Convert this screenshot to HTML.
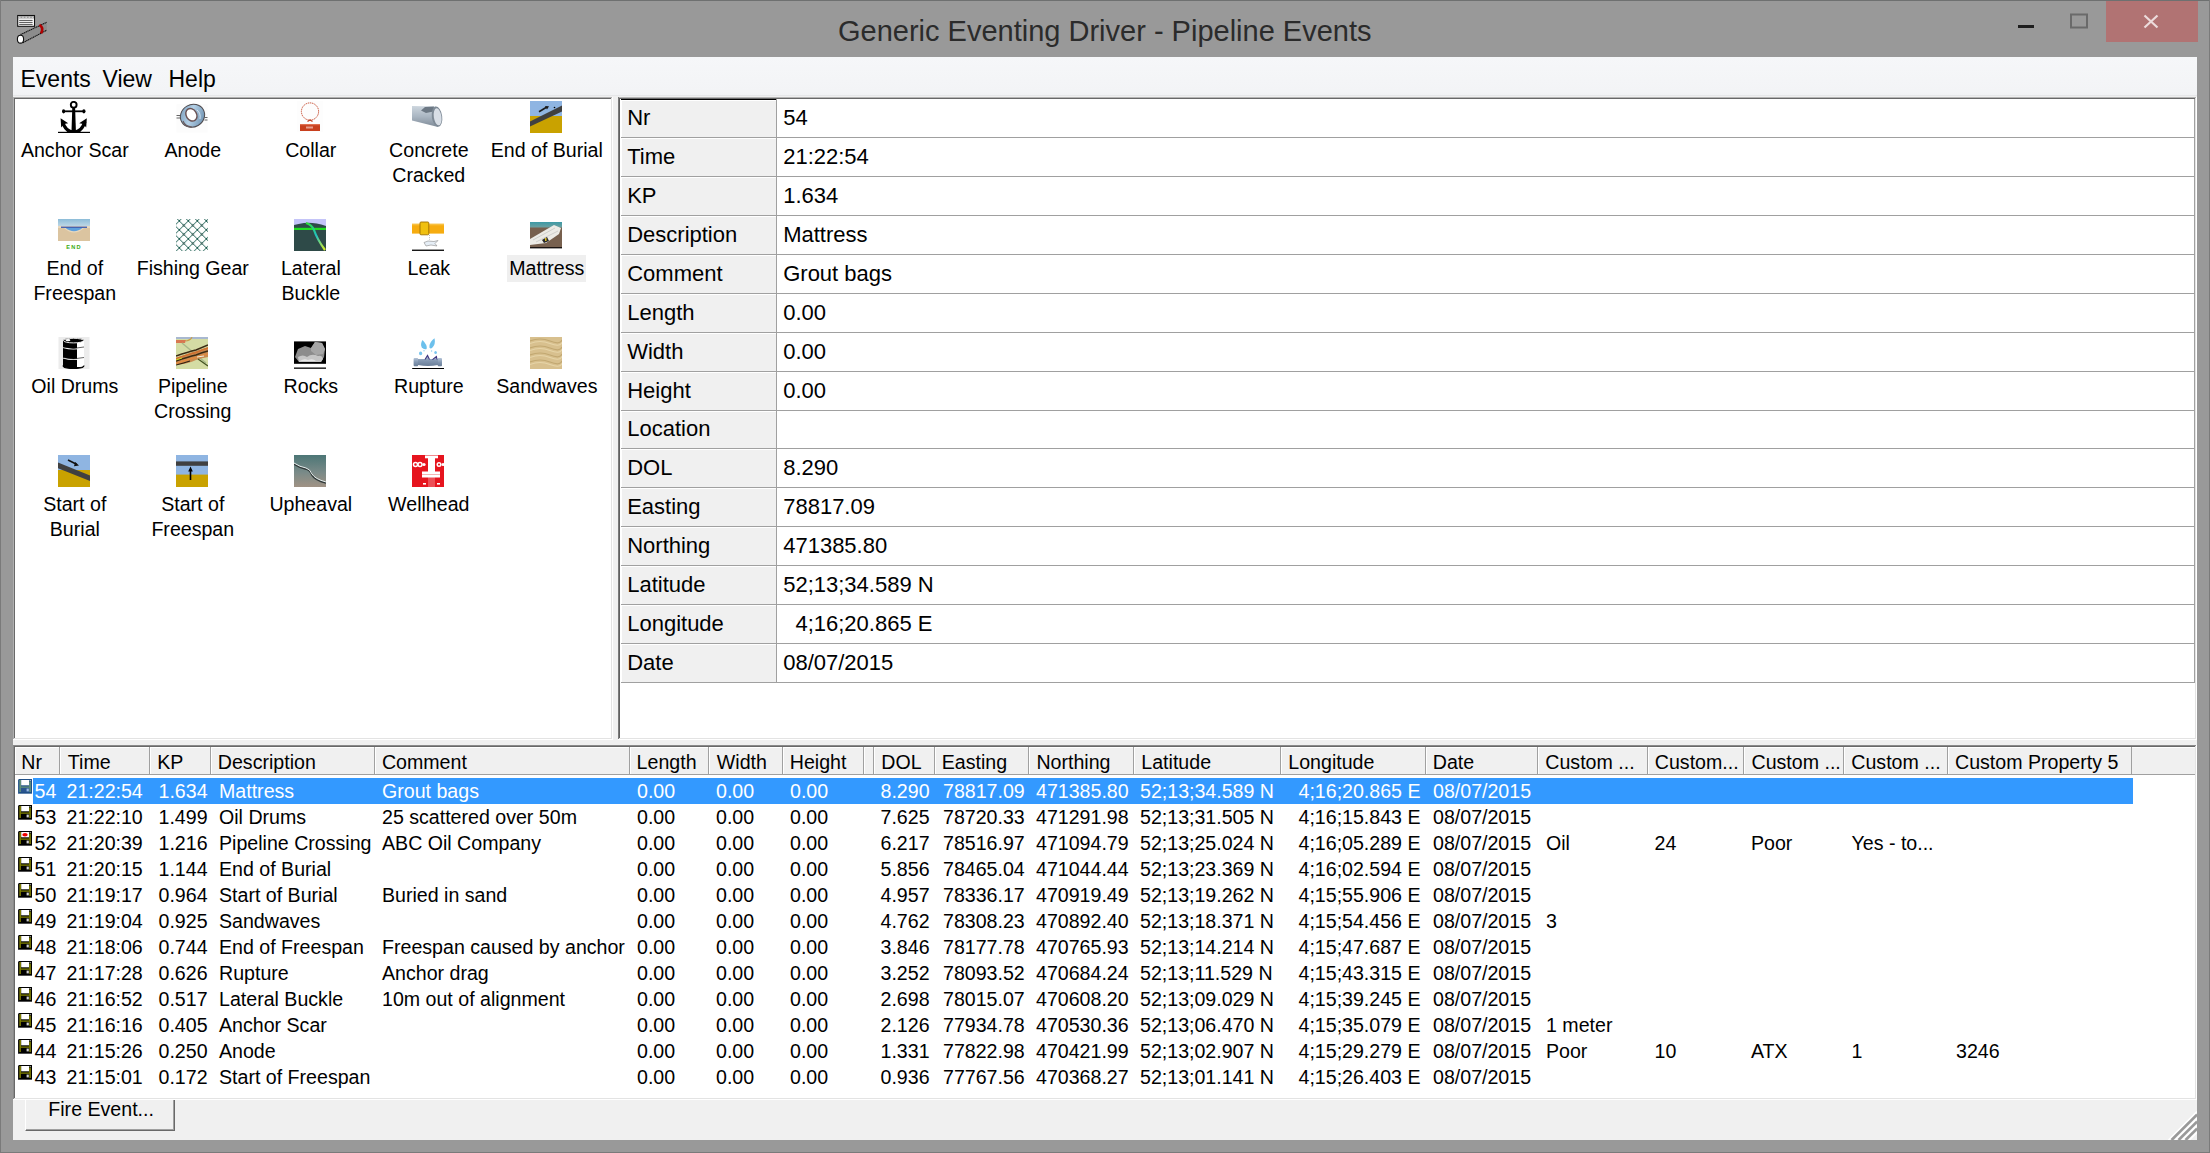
<!DOCTYPE html>
<html><head><meta charset="utf-8"><title>Generic Eventing Driver - Pipeline Events</title>
<style>
html,body{margin:0;padding:0;width:2210px;height:1153px;overflow:hidden;background:#999;}
body{position:relative;font-family:"Liberation Sans",sans-serif;}
.r{position:absolute;}
.t{position:absolute;line-height:30px;white-space:pre;}
</style></head><body>
<div class="r" style="left:0px;top:0px;width:2210px;height:1153px;background:#999999;"></div>
<div class="r" style="left:0px;top:0px;width:2210px;height:1px;background:#6e7070;"></div>
<div class="r" style="left:0px;top:0px;width:1px;height:1153px;background:#7a7a7a;"></div>
<div class="r" style="left:2209px;top:0px;width:1px;height:1153px;background:#7a7a7a;"></div>
<div class="r" style="left:0px;top:1152px;width:2210px;height:1px;background:#7a7a7a;"></div>
<div class="r" style="left:2106px;top:1px;width:92px;height:41px;background:#b17373;"></div>
<svg class="r" style="left:2106px;top:1px" width="92" height="41"><path d="M38.5 14.5 L51.5 26.5 M51.5 14.5 L38.5 26.5" stroke="#ecdcdc" stroke-width="2.2"/></svg>
<svg class="r" style="left:2060px;top:8px" width="40" height="30"><rect x="11" y="6.5" width="16" height="13" fill="none" stroke="#6a6a6a" stroke-width="2"/></svg>
<div class="r" style="left:2018px;top:25px;width:16px;height:3px;background:#1e1e1e;"></div>
<div class="t" style="left:838.0px;top:16.15px;font-size:29px;color:#2b2b2b;">Generic Eventing Driver - Pipeline Events</div>
<svg class="r" style="left:0px;top:0px" width="60" height="50" viewBox="0 0 60 50">
<rect x="17.7" y="15.5" width="16.8" height="10.8" fill="#fff" stroke="#111" stroke-width="1.1"/>
<rect x="18.3" y="16.1" width="15.6" height="2.4" fill="#9a9a9a"/>
<path d="M19 17.3h14" stroke="#e0e0e0" stroke-width="1.1" stroke-dasharray="1.6 1.6"/>
<path d="M19.2 20.4h13.4M19.2 22.4h13.4M19.2 24.4h13.4" stroke="#222" stroke-width="0.8"/>
<path d="M20.5 34.6 L46.8 22.2 L46.8 30.2 L22.9 42.7 Z" fill="#8c8c8c"/>
<path d="M20.5 34.6 L46.8 22.2 M22.9 42.7 L46.8 30.2" stroke="#111" stroke-width="1.1" stroke-dasharray="1.4 0.5"/>
<path d="M39.4 24.8 Q44.2 27.6 41 33.4" stroke="#b00000" stroke-width="2.6" fill="none"/>
<ellipse cx="20.5" cy="39.2" rx="3.1" ry="3.9" fill="#fff" stroke="#111" stroke-width="1.1"/>
</svg>
<div class="r" style="left:13px;top:57px;width:2184px;height:1083px;background:#f0f0f0;"></div>
<div class="r" style="left:13px;top:57px;width:2184px;height:40px;background:linear-gradient(#f6f7f9 0%,#f3f4f6 85%,#f0f1f3 100%);"></div>
<div class="r" style="left:13px;top:95px;width:2184px;height:1px;background:#e6e7e9;"></div>
<div class="r" style="left:13px;top:96px;width:2184px;height:1px;background:#f0f0f0;"></div>
<div class="t" style="left:20.5px;top:63.83px;font-size:23px;color:#000;">Events</div>
<div class="t" style="left:102.5px;top:63.83px;font-size:23px;color:#000;">View</div>
<div class="t" style="left:168.5px;top:63.83px;font-size:23px;color:#000;">Help</div>
<div class="r" style="left:13px;top:97px;width:600px;height:643px;background:#fff;"></div>
<div class="r" style="left:13px;top:97px;width:599px;height:1px;background:#b0b0b0;"></div>
<div class="r" style="left:13px;top:97px;width:1px;height:642px;background:#b0b0b0;"></div>
<div class="r" style="left:14px;top:98px;width:597px;height:1px;background:#696969;"></div>
<div class="r" style="left:14px;top:98px;width:1px;height:640px;background:#696969;"></div>
<div class="r" style="left:13px;top:739px;width:600px;height:1px;background:#fff;"></div>
<div class="r" style="left:612px;top:97px;width:1px;height:643px;background:#fff;"></div>
<div class="r" style="left:14px;top:738px;width:598px;height:1px;background:#e3e3e3;"></div>
<div class="r" style="left:611px;top:98px;width:1px;height:641px;background:#e3e3e3;"></div>
<div class="r" style="left:618px;top:97px;width:1579px;height:643px;background:#fff;"></div>
<div class="r" style="left:618px;top:97px;width:1578px;height:1px;background:#b4b4b4;"></div>
<div class="r" style="left:618px;top:97px;width:1px;height:642px;background:#b4b4b4;"></div>
<div class="r" style="left:619px;top:98px;width:1576px;height:1px;background:#686868;"></div>
<div class="r" style="left:619px;top:98px;width:1px;height:640px;background:#686868;"></div>
<div class="r" style="left:618px;top:739px;width:1579px;height:1px;background:#fff;"></div>
<div class="r" style="left:2196px;top:97px;width:1px;height:643px;background:#fff;"></div>
<div class="r" style="left:619px;top:738px;width:1577px;height:1px;background:#e3e3e3;"></div>
<div class="r" style="left:2195px;top:98px;width:1px;height:641px;background:#e3e3e3;"></div>
<div class="r" style="left:618px;top:97px;width:1px;height:642px;background:#7a7a7a;"></div>
<div class="r" style="left:619px;top:98px;width:1px;height:640px;background:#606060;"></div>
<div class="r" style="left:621px;top:99px;width:155px;height:1px;background:#000;"></div>
<div class="r" style="left:621px;top:100px;width:155px;height:37px;background:#f0f0f0;"></div>
<div class="r" style="left:621px;top:100px;width:155px;height:1px;background:#fff;"></div>
<div class="r" style="left:621px;top:100px;width:1px;height:37px;background:#fff;"></div>
<div class="r" style="left:621px;top:137px;width:1573px;height:1px;background:#a0a0a0;"></div>
<div class="t" style="left:627.2px;top:102.77px;font-size:22px;color:#000;">Nr</div>
<div class="t" style="left:783.2px;top:102.77px;font-size:22px;color:#000;">54</div>
<div class="r" style="left:621px;top:138px;width:155px;height:38px;background:#f0f0f0;"></div>
<div class="r" style="left:621px;top:138px;width:155px;height:1px;background:#fff;"></div>
<div class="r" style="left:621px;top:138px;width:1px;height:38px;background:#fff;"></div>
<div class="r" style="left:621px;top:176px;width:1573px;height:1px;background:#a0a0a0;"></div>
<div class="t" style="left:627.2px;top:141.77px;font-size:22px;color:#000;">Time</div>
<div class="t" style="left:783.2px;top:141.77px;font-size:22px;color:#000;">21:22:54</div>
<div class="r" style="left:621px;top:177px;width:155px;height:38px;background:#f0f0f0;"></div>
<div class="r" style="left:621px;top:177px;width:155px;height:1px;background:#fff;"></div>
<div class="r" style="left:621px;top:177px;width:1px;height:38px;background:#fff;"></div>
<div class="r" style="left:621px;top:215px;width:1573px;height:1px;background:#a0a0a0;"></div>
<div class="t" style="left:627.2px;top:180.77px;font-size:22px;color:#000;">KP</div>
<div class="t" style="left:783.2px;top:180.77px;font-size:22px;color:#000;">1.634</div>
<div class="r" style="left:621px;top:216px;width:155px;height:38px;background:#f0f0f0;"></div>
<div class="r" style="left:621px;top:216px;width:155px;height:1px;background:#fff;"></div>
<div class="r" style="left:621px;top:216px;width:1px;height:38px;background:#fff;"></div>
<div class="r" style="left:621px;top:254px;width:1573px;height:1px;background:#a0a0a0;"></div>
<div class="t" style="left:627.2px;top:219.77px;font-size:22px;color:#000;">Description</div>
<div class="t" style="left:783.2px;top:219.77px;font-size:22px;color:#000;">Mattress</div>
<div class="r" style="left:621px;top:255px;width:155px;height:38px;background:#f0f0f0;"></div>
<div class="r" style="left:621px;top:255px;width:155px;height:1px;background:#fff;"></div>
<div class="r" style="left:621px;top:255px;width:1px;height:38px;background:#fff;"></div>
<div class="r" style="left:621px;top:293px;width:1573px;height:1px;background:#a0a0a0;"></div>
<div class="t" style="left:627.2px;top:258.77px;font-size:22px;color:#000;">Comment</div>
<div class="t" style="left:783.2px;top:258.77px;font-size:22px;color:#000;">Grout&nbsp;bags</div>
<div class="r" style="left:621px;top:294px;width:155px;height:38px;background:#f0f0f0;"></div>
<div class="r" style="left:621px;top:294px;width:155px;height:1px;background:#fff;"></div>
<div class="r" style="left:621px;top:294px;width:1px;height:38px;background:#fff;"></div>
<div class="r" style="left:621px;top:332px;width:1573px;height:1px;background:#a0a0a0;"></div>
<div class="t" style="left:627.2px;top:297.77px;font-size:22px;color:#000;">Length</div>
<div class="t" style="left:783.2px;top:297.77px;font-size:22px;color:#000;">0.00</div>
<div class="r" style="left:621px;top:333px;width:155px;height:38px;background:#f0f0f0;"></div>
<div class="r" style="left:621px;top:333px;width:155px;height:1px;background:#fff;"></div>
<div class="r" style="left:621px;top:333px;width:1px;height:38px;background:#fff;"></div>
<div class="r" style="left:621px;top:371px;width:1573px;height:1px;background:#a0a0a0;"></div>
<div class="t" style="left:627.2px;top:336.77px;font-size:22px;color:#000;">Width</div>
<div class="t" style="left:783.2px;top:336.77px;font-size:22px;color:#000;">0.00</div>
<div class="r" style="left:621px;top:372px;width:155px;height:38px;background:#f0f0f0;"></div>
<div class="r" style="left:621px;top:372px;width:155px;height:1px;background:#fff;"></div>
<div class="r" style="left:621px;top:372px;width:1px;height:38px;background:#fff;"></div>
<div class="r" style="left:621px;top:410px;width:1573px;height:1px;background:#a0a0a0;"></div>
<div class="t" style="left:627.2px;top:375.77px;font-size:22px;color:#000;">Height</div>
<div class="t" style="left:783.2px;top:375.77px;font-size:22px;color:#000;">0.00</div>
<div class="r" style="left:621px;top:411px;width:155px;height:37px;background:#f0f0f0;"></div>
<div class="r" style="left:621px;top:411px;width:155px;height:1px;background:#fff;"></div>
<div class="r" style="left:621px;top:411px;width:1px;height:37px;background:#fff;"></div>
<div class="r" style="left:621px;top:448px;width:1573px;height:1px;background:#a0a0a0;"></div>
<div class="t" style="left:627.2px;top:413.77px;font-size:22px;color:#000;">Location</div>
<div class="r" style="left:621px;top:449px;width:155px;height:38px;background:#f0f0f0;"></div>
<div class="r" style="left:621px;top:449px;width:155px;height:1px;background:#fff;"></div>
<div class="r" style="left:621px;top:449px;width:1px;height:38px;background:#fff;"></div>
<div class="r" style="left:621px;top:487px;width:1573px;height:1px;background:#a0a0a0;"></div>
<div class="t" style="left:627.2px;top:452.77px;font-size:22px;color:#000;">DOL</div>
<div class="t" style="left:783.2px;top:452.77px;font-size:22px;color:#000;">8.290</div>
<div class="r" style="left:621px;top:488px;width:155px;height:38px;background:#f0f0f0;"></div>
<div class="r" style="left:621px;top:488px;width:155px;height:1px;background:#fff;"></div>
<div class="r" style="left:621px;top:488px;width:1px;height:38px;background:#fff;"></div>
<div class="r" style="left:621px;top:526px;width:1573px;height:1px;background:#a0a0a0;"></div>
<div class="t" style="left:627.2px;top:491.77px;font-size:22px;color:#000;">Easting</div>
<div class="t" style="left:783.2px;top:491.77px;font-size:22px;color:#000;">78817.09</div>
<div class="r" style="left:621px;top:527px;width:155px;height:38px;background:#f0f0f0;"></div>
<div class="r" style="left:621px;top:527px;width:155px;height:1px;background:#fff;"></div>
<div class="r" style="left:621px;top:527px;width:1px;height:38px;background:#fff;"></div>
<div class="r" style="left:621px;top:565px;width:1573px;height:1px;background:#a0a0a0;"></div>
<div class="t" style="left:627.2px;top:530.77px;font-size:22px;color:#000;">Northing</div>
<div class="t" style="left:783.2px;top:530.77px;font-size:22px;color:#000;">471385.80</div>
<div class="r" style="left:621px;top:566px;width:155px;height:38px;background:#f0f0f0;"></div>
<div class="r" style="left:621px;top:566px;width:155px;height:1px;background:#fff;"></div>
<div class="r" style="left:621px;top:566px;width:1px;height:38px;background:#fff;"></div>
<div class="r" style="left:621px;top:604px;width:1573px;height:1px;background:#a0a0a0;"></div>
<div class="t" style="left:627.2px;top:569.77px;font-size:22px;color:#000;">Latitude</div>
<div class="t" style="left:783.2px;top:569.77px;font-size:22px;color:#000;">52;13;34.589&nbsp;N</div>
<div class="r" style="left:621px;top:605px;width:155px;height:38px;background:#f0f0f0;"></div>
<div class="r" style="left:621px;top:605px;width:155px;height:1px;background:#fff;"></div>
<div class="r" style="left:621px;top:605px;width:1px;height:38px;background:#fff;"></div>
<div class="r" style="left:621px;top:643px;width:1573px;height:1px;background:#a0a0a0;"></div>
<div class="t" style="left:627.2px;top:608.77px;font-size:22px;color:#000;">Longitude</div>
<div class="t" style="left:783.2px;top:608.77px;font-size:22px;color:#000;">&nbsp;&nbsp;4;16;20.865&nbsp;E</div>
<div class="r" style="left:621px;top:644px;width:155px;height:38px;background:#f0f0f0;"></div>
<div class="r" style="left:621px;top:644px;width:155px;height:1px;background:#fff;"></div>
<div class="r" style="left:621px;top:644px;width:1px;height:38px;background:#fff;"></div>
<div class="r" style="left:621px;top:682px;width:1573px;height:1px;background:#a0a0a0;"></div>
<div class="t" style="left:627.2px;top:647.77px;font-size:22px;color:#000;">Date</div>
<div class="t" style="left:783.2px;top:647.77px;font-size:22px;color:#000;">08/07/2015</div>
<div class="r" style="left:776px;top:99px;width:1px;height:584px;background:#a0a0a0;"></div>
<div class="r" style="left:2194px;top:99px;width:1px;height:584px;background:#a0a0a0;"></div>
<div class="r" style="left:13px;top:745px;width:2184px;height:355px;background:#fff;"></div>
<div class="r" style="left:13px;top:745px;width:2183px;height:1px;background:#8a8a8a;"></div>
<div class="r" style="left:13px;top:745px;width:1px;height:354px;background:#8a8a8a;"></div>
<div class="r" style="left:14px;top:746px;width:2181px;height:1px;background:#696969;"></div>
<div class="r" style="left:14px;top:746px;width:1px;height:352px;background:#696969;"></div>
<div class="r" style="left:13px;top:1099px;width:2184px;height:1px;background:#fff;"></div>
<div class="r" style="left:2196px;top:745px;width:1px;height:355px;background:#fff;"></div>
<div class="r" style="left:14px;top:1098px;width:2182px;height:1px;background:#e3e3e3;"></div>
<div class="r" style="left:2195px;top:746px;width:1px;height:353px;background:#e3e3e3;"></div>
<div class="r" style="left:15px;top:747px;width:2180px;height:28px;background:#f0f0f0;"></div>
<div class="r" style="left:15px;top:747px;width:2180px;height:1px;background:#fff;"></div>
<div class="r" style="left:15px;top:774px;width:2180px;height:1px;background:#a0a0a0;"></div>
<div class="r" style="left:15px;top:747px;width:1px;height:27px;background:#fff;"></div>
<div class="r" style="left:59px;top:747px;width:1px;height:28px;background:#a0a0a0;"></div>
<div class="t" style="left:21.3px;top:747.10px;font-size:19.6px;color:#000;">Nr</div>
<div class="r" style="left:60px;top:747px;width:1px;height:27px;background:#fff;"></div>
<div class="r" style="left:149px;top:747px;width:1px;height:28px;background:#a0a0a0;"></div>
<div class="t" style="left:67.8px;top:747.10px;font-size:19.6px;color:#000;">Time</div>
<div class="r" style="left:150px;top:747px;width:1px;height:27px;background:#fff;"></div>
<div class="r" style="left:210px;top:747px;width:1px;height:28px;background:#a0a0a0;"></div>
<div class="t" style="left:157.3px;top:747.10px;font-size:19.6px;color:#000;">KP</div>
<div class="r" style="left:211px;top:747px;width:1px;height:27px;background:#fff;"></div>
<div class="r" style="left:374px;top:747px;width:1px;height:28px;background:#a0a0a0;"></div>
<div class="t" style="left:217.8px;top:747.10px;font-size:19.6px;color:#000;">Description</div>
<div class="r" style="left:375px;top:747px;width:1px;height:27px;background:#fff;"></div>
<div class="r" style="left:629px;top:747px;width:1px;height:28px;background:#a0a0a0;"></div>
<div class="t" style="left:381.9px;top:747.10px;font-size:19.6px;color:#000;">Comment</div>
<div class="r" style="left:630px;top:747px;width:1px;height:27px;background:#fff;"></div>
<div class="r" style="left:708px;top:747px;width:1px;height:28px;background:#a0a0a0;"></div>
<div class="t" style="left:636.6px;top:747.10px;font-size:19.6px;color:#000;">Length</div>
<div class="r" style="left:709px;top:747px;width:1px;height:27px;background:#fff;"></div>
<div class="r" style="left:782px;top:747px;width:1px;height:28px;background:#a0a0a0;"></div>
<div class="t" style="left:716.8px;top:747.10px;font-size:19.6px;color:#000;">Width</div>
<div class="r" style="left:783px;top:747px;width:1px;height:27px;background:#fff;"></div>
<div class="r" style="left:863px;top:747px;width:1px;height:28px;background:#a0a0a0;"></div>
<div class="t" style="left:789.8px;top:747.10px;font-size:19.6px;color:#000;">Height</div>
<div class="r" style="left:864px;top:747px;width:1px;height:27px;background:#fff;"></div>
<div class="r" style="left:873px;top:747px;width:1px;height:28px;background:#a0a0a0;"></div>
<div class="r" style="left:874px;top:747px;width:1px;height:27px;background:#fff;"></div>
<div class="r" style="left:934px;top:747px;width:1px;height:28px;background:#a0a0a0;"></div>
<div class="t" style="left:881.3px;top:747.10px;font-size:19.6px;color:#000;">DOL</div>
<div class="r" style="left:935px;top:747px;width:1px;height:27px;background:#fff;"></div>
<div class="r" style="left:1028px;top:747px;width:1px;height:28px;background:#a0a0a0;"></div>
<div class="t" style="left:941.8px;top:747.10px;font-size:19.6px;color:#000;">Easting</div>
<div class="r" style="left:1029px;top:747px;width:1px;height:27px;background:#fff;"></div>
<div class="r" style="left:1133px;top:747px;width:1px;height:28px;background:#a0a0a0;"></div>
<div class="t" style="left:1036.4px;top:747.10px;font-size:19.6px;color:#000;">Northing</div>
<div class="r" style="left:1134px;top:747px;width:1px;height:27px;background:#fff;"></div>
<div class="r" style="left:1280px;top:747px;width:1px;height:28px;background:#a0a0a0;"></div>
<div class="t" style="left:1141.3px;top:747.10px;font-size:19.6px;color:#000;">Latitude</div>
<div class="r" style="left:1281px;top:747px;width:1px;height:27px;background:#fff;"></div>
<div class="r" style="left:1425px;top:747px;width:1px;height:28px;background:#a0a0a0;"></div>
<div class="t" style="left:1288.3px;top:747.10px;font-size:19.6px;color:#000;">Longitude</div>
<div class="r" style="left:1426px;top:747px;width:1px;height:27px;background:#fff;"></div>
<div class="r" style="left:1537px;top:747px;width:1px;height:28px;background:#a0a0a0;"></div>
<div class="t" style="left:1432.8px;top:747.10px;font-size:19.6px;color:#000;">Date</div>
<div class="r" style="left:1538px;top:747px;width:1px;height:27px;background:#fff;"></div>
<div class="r" style="left:1647px;top:747px;width:1px;height:28px;background:#a0a0a0;"></div>
<div class="t" style="left:1545.3px;top:747.10px;font-size:19.6px;color:#000;">Custom ...</div>
<div class="r" style="left:1648px;top:747px;width:1px;height:27px;background:#fff;"></div>
<div class="r" style="left:1743px;top:747px;width:1px;height:28px;background:#a0a0a0;"></div>
<div class="t" style="left:1654.8px;top:747.10px;font-size:19.6px;color:#000;">Custom...</div>
<div class="r" style="left:1744px;top:747px;width:1px;height:27px;background:#fff;"></div>
<div class="r" style="left:1843px;top:747px;width:1px;height:28px;background:#a0a0a0;"></div>
<div class="t" style="left:1751.5px;top:747.10px;font-size:19.6px;color:#000;">Custom ...</div>
<div class="r" style="left:1844px;top:747px;width:1px;height:27px;background:#fff;"></div>
<div class="r" style="left:1947px;top:747px;width:1px;height:28px;background:#a0a0a0;"></div>
<div class="t" style="left:1851.3px;top:747.10px;font-size:19.6px;color:#000;">Custom ...</div>
<div class="r" style="left:1948px;top:747px;width:1px;height:27px;background:#fff;"></div>
<div class="r" style="left:2131px;top:747px;width:1px;height:28px;background:#a0a0a0;"></div>
<div class="t" style="left:1955.0px;top:747.10px;font-size:19.6px;color:#000;">Custom Property 5</div>
<div class="r" style="left:33px;top:778px;width:2100px;height:26px;background:#3399ff;"></div>
<svg class="r" style="left:18px;top:779px" width="15" height="15" viewBox="0 0 15 15"><rect x="0" y="0.8" width="14" height="14" fill="#1f4f86" opacity="0.85"/><rect x="0.6" y="0" width="13.4" height="14" fill="#1f4f86"/><rect x="1.4" y="1" width="1.5" height="12" fill="#6a9a7a"/><rect x="11.2" y="2.6" width="1.6" height="10.4" fill="#6a9a7a"/><rect x="2.9" y="8.6" width="8.3" height="4.4" fill="#2a5590"/><rect x="2.9" y="7.5" width="8.3" height="1.2" fill="#6a9a7a"/><rect x="3.2" y="1" width="7.8" height="5.3" fill="#fff"/><rect x="11.6" y="1.1" width="1" height="1" fill="#fff"/><rect x="8.6" y="9.6" width="2.2" height="2.8" fill="#9cbce6"/></svg>
<div class="t" style="left:34.5px;top:776.00px;font-size:19.6px;color:#fff;">54</div>
<div class="t" style="left:66.5px;top:776.00px;font-size:19.6px;color:#fff;">21:22:54</div>
<div class="t" style="left:158.5px;top:776.00px;font-size:19.6px;color:#fff;">1.634</div>
<div class="t" style="left:219.0px;top:776.00px;font-size:19.6px;color:#fff;">Mattress</div>
<div class="t" style="left:382.0px;top:776.00px;font-size:19.6px;color:#fff;">Grout bags</div>
<div class="t" style="left:637.0px;top:776.00px;font-size:19.6px;color:#fff;">0.00</div>
<div class="t" style="left:716.0px;top:776.00px;font-size:19.6px;color:#fff;">0.00</div>
<div class="t" style="left:790.0px;top:776.00px;font-size:19.6px;color:#fff;">0.00</div>
<div class="t" style="left:880.5px;top:776.00px;font-size:19.6px;color:#fff;">8.290</div>
<div class="t" style="left:943.0px;top:776.00px;font-size:19.6px;color:#fff;">78817.09</div>
<div class="t" style="left:1036.0px;top:776.00px;font-size:19.6px;color:#fff;">471385.80</div>
<div class="t" style="left:1140.0px;top:776.00px;font-size:19.6px;color:#fff;">52;13;34.589 N</div>
<div class="t" style="left:1298.5px;top:776.00px;font-size:19.6px;color:#fff;">4;16;20.865 E</div>
<div class="t" style="left:1433.0px;top:776.00px;font-size:19.6px;color:#fff;">08/07/2015</div>
<svg class="r" style="left:18px;top:805px" width="15" height="15" viewBox="0 0 15 15"><rect x="0" y="0.8" width="14" height="14" fill="#000" opacity="0.85"/><rect x="0.6" y="0" width="13.4" height="14" fill="#000"/><rect x="1.4" y="1" width="1.5" height="12" fill="#8a8a00"/><rect x="11.2" y="2.6" width="1.6" height="10.4" fill="#8a8a00"/><rect x="2.9" y="8.6" width="8.3" height="4.4" fill="#000"/><rect x="2.9" y="7.5" width="8.3" height="1.2" fill="#8a8a00"/><rect x="3.2" y="1" width="7.8" height="5.3" fill="#fff"/><rect x="11.6" y="1.1" width="1" height="1" fill="#fff"/><rect x="8.6" y="9.6" width="2.2" height="2.8" fill="#d0d0d0"/></svg>
<div class="t" style="left:34.5px;top:802.00px;font-size:19.6px;color:#000;">53</div>
<div class="t" style="left:66.5px;top:802.00px;font-size:19.6px;color:#000;">21:22:10</div>
<div class="t" style="left:158.5px;top:802.00px;font-size:19.6px;color:#000;">1.499</div>
<div class="t" style="left:219.0px;top:802.00px;font-size:19.6px;color:#000;">Oil Drums</div>
<div class="t" style="left:382.0px;top:802.00px;font-size:19.6px;color:#000;">25 scattered over 50m</div>
<div class="t" style="left:637.0px;top:802.00px;font-size:19.6px;color:#000;">0.00</div>
<div class="t" style="left:716.0px;top:802.00px;font-size:19.6px;color:#000;">0.00</div>
<div class="t" style="left:790.0px;top:802.00px;font-size:19.6px;color:#000;">0.00</div>
<div class="t" style="left:880.5px;top:802.00px;font-size:19.6px;color:#000;">7.625</div>
<div class="t" style="left:943.0px;top:802.00px;font-size:19.6px;color:#000;">78720.33</div>
<div class="t" style="left:1036.0px;top:802.00px;font-size:19.6px;color:#000;">471291.98</div>
<div class="t" style="left:1140.0px;top:802.00px;font-size:19.6px;color:#000;">52;13;31.505 N</div>
<div class="t" style="left:1298.5px;top:802.00px;font-size:19.6px;color:#000;">4;16;15.843 E</div>
<div class="t" style="left:1433.0px;top:802.00px;font-size:19.6px;color:#000;">08/07/2015</div>
<svg class="r" style="left:18px;top:831px" width="15" height="15" viewBox="0 0 15 15"><rect x="0" y="0.8" width="14" height="14" fill="#000" opacity="0.85"/><rect x="0.6" y="0" width="13.4" height="14" fill="#000"/><rect x="1.4" y="1" width="1.5" height="12" fill="#8a8a00"/><rect x="11.2" y="2.6" width="1.6" height="10.4" fill="#8a8a00"/><rect x="2.9" y="8.6" width="8.3" height="4.4" fill="#000"/><rect x="2.9" y="7.5" width="8.3" height="1.2" fill="#8a8a00"/><rect x="3.2" y="1" width="7.8" height="5.3" fill="#fff"/><ellipse cx="7" cy="3.8" rx="2.7" ry="1.7" fill="#f00000"/><rect x="11.6" y="1.1" width="1" height="1" fill="#fff"/><rect x="8.6" y="9.6" width="2.2" height="2.8" fill="#d0d0d0"/></svg>
<div class="t" style="left:34.5px;top:828.00px;font-size:19.6px;color:#000;">52</div>
<div class="t" style="left:66.5px;top:828.00px;font-size:19.6px;color:#000;">21:20:39</div>
<div class="t" style="left:158.5px;top:828.00px;font-size:19.6px;color:#000;">1.216</div>
<div class="t" style="left:219.0px;top:828.00px;font-size:19.6px;color:#000;">Pipeline Crossing</div>
<div class="t" style="left:382.0px;top:828.00px;font-size:19.6px;color:#000;">ABC Oil Company</div>
<div class="t" style="left:637.0px;top:828.00px;font-size:19.6px;color:#000;">0.00</div>
<div class="t" style="left:716.0px;top:828.00px;font-size:19.6px;color:#000;">0.00</div>
<div class="t" style="left:790.0px;top:828.00px;font-size:19.6px;color:#000;">0.00</div>
<div class="t" style="left:880.5px;top:828.00px;font-size:19.6px;color:#000;">6.217</div>
<div class="t" style="left:943.0px;top:828.00px;font-size:19.6px;color:#000;">78516.97</div>
<div class="t" style="left:1036.0px;top:828.00px;font-size:19.6px;color:#000;">471094.79</div>
<div class="t" style="left:1140.0px;top:828.00px;font-size:19.6px;color:#000;">52;13;25.024 N</div>
<div class="t" style="left:1298.5px;top:828.00px;font-size:19.6px;color:#000;">4;16;05.289 E</div>
<div class="t" style="left:1433.0px;top:828.00px;font-size:19.6px;color:#000;">08/07/2015</div>
<div class="t" style="left:1546.0px;top:828.00px;font-size:19.6px;color:#000;">Oil</div>
<div class="t" style="left:1654.5px;top:828.00px;font-size:19.6px;color:#000;">24</div>
<div class="t" style="left:1751.0px;top:828.00px;font-size:19.6px;color:#000;">Poor</div>
<div class="t" style="left:1851.5px;top:828.00px;font-size:19.6px;color:#000;">Yes - to...</div>
<svg class="r" style="left:18px;top:857px" width="15" height="15" viewBox="0 0 15 15"><rect x="0" y="0.8" width="14" height="14" fill="#000" opacity="0.85"/><rect x="0.6" y="0" width="13.4" height="14" fill="#000"/><rect x="1.4" y="1" width="1.5" height="12" fill="#8a8a00"/><rect x="11.2" y="2.6" width="1.6" height="10.4" fill="#8a8a00"/><rect x="2.9" y="8.6" width="8.3" height="4.4" fill="#000"/><rect x="2.9" y="7.5" width="8.3" height="1.2" fill="#8a8a00"/><rect x="3.2" y="1" width="7.8" height="5.3" fill="#fff"/><rect x="11.6" y="1.1" width="1" height="1" fill="#fff"/><rect x="8.6" y="9.6" width="2.2" height="2.8" fill="#d0d0d0"/></svg>
<div class="t" style="left:34.5px;top:854.00px;font-size:19.6px;color:#000;">51</div>
<div class="t" style="left:66.5px;top:854.00px;font-size:19.6px;color:#000;">21:20:15</div>
<div class="t" style="left:158.5px;top:854.00px;font-size:19.6px;color:#000;">1.144</div>
<div class="t" style="left:219.0px;top:854.00px;font-size:19.6px;color:#000;">End of Burial</div>
<div class="t" style="left:637.0px;top:854.00px;font-size:19.6px;color:#000;">0.00</div>
<div class="t" style="left:716.0px;top:854.00px;font-size:19.6px;color:#000;">0.00</div>
<div class="t" style="left:790.0px;top:854.00px;font-size:19.6px;color:#000;">0.00</div>
<div class="t" style="left:880.5px;top:854.00px;font-size:19.6px;color:#000;">5.856</div>
<div class="t" style="left:943.0px;top:854.00px;font-size:19.6px;color:#000;">78465.04</div>
<div class="t" style="left:1036.0px;top:854.00px;font-size:19.6px;color:#000;">471044.44</div>
<div class="t" style="left:1140.0px;top:854.00px;font-size:19.6px;color:#000;">52;13;23.369 N</div>
<div class="t" style="left:1298.5px;top:854.00px;font-size:19.6px;color:#000;">4;16;02.594 E</div>
<div class="t" style="left:1433.0px;top:854.00px;font-size:19.6px;color:#000;">08/07/2015</div>
<svg class="r" style="left:18px;top:883px" width="15" height="15" viewBox="0 0 15 15"><rect x="0" y="0.8" width="14" height="14" fill="#000" opacity="0.85"/><rect x="0.6" y="0" width="13.4" height="14" fill="#000"/><rect x="1.4" y="1" width="1.5" height="12" fill="#8a8a00"/><rect x="11.2" y="2.6" width="1.6" height="10.4" fill="#8a8a00"/><rect x="2.9" y="8.6" width="8.3" height="4.4" fill="#000"/><rect x="2.9" y="7.5" width="8.3" height="1.2" fill="#8a8a00"/><rect x="3.2" y="1" width="7.8" height="5.3" fill="#fff"/><rect x="11.6" y="1.1" width="1" height="1" fill="#fff"/><rect x="8.6" y="9.6" width="2.2" height="2.8" fill="#d0d0d0"/></svg>
<div class="t" style="left:34.5px;top:880.00px;font-size:19.6px;color:#000;">50</div>
<div class="t" style="left:66.5px;top:880.00px;font-size:19.6px;color:#000;">21:19:17</div>
<div class="t" style="left:158.5px;top:880.00px;font-size:19.6px;color:#000;">0.964</div>
<div class="t" style="left:219.0px;top:880.00px;font-size:19.6px;color:#000;">Start of Burial</div>
<div class="t" style="left:382.0px;top:880.00px;font-size:19.6px;color:#000;">Buried in sand</div>
<div class="t" style="left:637.0px;top:880.00px;font-size:19.6px;color:#000;">0.00</div>
<div class="t" style="left:716.0px;top:880.00px;font-size:19.6px;color:#000;">0.00</div>
<div class="t" style="left:790.0px;top:880.00px;font-size:19.6px;color:#000;">0.00</div>
<div class="t" style="left:880.5px;top:880.00px;font-size:19.6px;color:#000;">4.957</div>
<div class="t" style="left:943.0px;top:880.00px;font-size:19.6px;color:#000;">78336.17</div>
<div class="t" style="left:1036.0px;top:880.00px;font-size:19.6px;color:#000;">470919.49</div>
<div class="t" style="left:1140.0px;top:880.00px;font-size:19.6px;color:#000;">52;13;19.262 N</div>
<div class="t" style="left:1298.5px;top:880.00px;font-size:19.6px;color:#000;">4;15;55.906 E</div>
<div class="t" style="left:1433.0px;top:880.00px;font-size:19.6px;color:#000;">08/07/2015</div>
<svg class="r" style="left:18px;top:909px" width="15" height="15" viewBox="0 0 15 15"><rect x="0" y="0.8" width="14" height="14" fill="#000" opacity="0.85"/><rect x="0.6" y="0" width="13.4" height="14" fill="#000"/><rect x="1.4" y="1" width="1.5" height="12" fill="#8a8a00"/><rect x="11.2" y="2.6" width="1.6" height="10.4" fill="#8a8a00"/><rect x="2.9" y="8.6" width="8.3" height="4.4" fill="#000"/><rect x="2.9" y="7.5" width="8.3" height="1.2" fill="#8a8a00"/><rect x="3.2" y="1" width="7.8" height="5.3" fill="#fff"/><rect x="11.6" y="1.1" width="1" height="1" fill="#fff"/><rect x="8.6" y="9.6" width="2.2" height="2.8" fill="#d0d0d0"/></svg>
<div class="t" style="left:34.5px;top:906.00px;font-size:19.6px;color:#000;">49</div>
<div class="t" style="left:66.5px;top:906.00px;font-size:19.6px;color:#000;">21:19:04</div>
<div class="t" style="left:158.5px;top:906.00px;font-size:19.6px;color:#000;">0.925</div>
<div class="t" style="left:219.0px;top:906.00px;font-size:19.6px;color:#000;">Sandwaves</div>
<div class="t" style="left:637.0px;top:906.00px;font-size:19.6px;color:#000;">0.00</div>
<div class="t" style="left:716.0px;top:906.00px;font-size:19.6px;color:#000;">0.00</div>
<div class="t" style="left:790.0px;top:906.00px;font-size:19.6px;color:#000;">0.00</div>
<div class="t" style="left:880.5px;top:906.00px;font-size:19.6px;color:#000;">4.762</div>
<div class="t" style="left:943.0px;top:906.00px;font-size:19.6px;color:#000;">78308.23</div>
<div class="t" style="left:1036.0px;top:906.00px;font-size:19.6px;color:#000;">470892.40</div>
<div class="t" style="left:1140.0px;top:906.00px;font-size:19.6px;color:#000;">52;13;18.371 N</div>
<div class="t" style="left:1298.5px;top:906.00px;font-size:19.6px;color:#000;">4;15;54.456 E</div>
<div class="t" style="left:1433.0px;top:906.00px;font-size:19.6px;color:#000;">08/07/2015</div>
<div class="t" style="left:1546.0px;top:906.00px;font-size:19.6px;color:#000;">3</div>
<svg class="r" style="left:18px;top:935px" width="15" height="15" viewBox="0 0 15 15"><rect x="0" y="0.8" width="14" height="14" fill="#000" opacity="0.85"/><rect x="0.6" y="0" width="13.4" height="14" fill="#000"/><rect x="1.4" y="1" width="1.5" height="12" fill="#8a8a00"/><rect x="11.2" y="2.6" width="1.6" height="10.4" fill="#8a8a00"/><rect x="2.9" y="8.6" width="8.3" height="4.4" fill="#000"/><rect x="2.9" y="7.5" width="8.3" height="1.2" fill="#8a8a00"/><rect x="3.2" y="1" width="7.8" height="5.3" fill="#fff"/><rect x="11.6" y="1.1" width="1" height="1" fill="#fff"/><rect x="8.6" y="9.6" width="2.2" height="2.8" fill="#d0d0d0"/></svg>
<div class="t" style="left:34.5px;top:932.00px;font-size:19.6px;color:#000;">48</div>
<div class="t" style="left:66.5px;top:932.00px;font-size:19.6px;color:#000;">21:18:06</div>
<div class="t" style="left:158.5px;top:932.00px;font-size:19.6px;color:#000;">0.744</div>
<div class="t" style="left:219.0px;top:932.00px;font-size:19.6px;color:#000;">End of Freespan</div>
<div class="t" style="left:382.0px;top:932.00px;font-size:19.6px;color:#000;">Freespan caused by anchor</div>
<div class="t" style="left:637.0px;top:932.00px;font-size:19.6px;color:#000;">0.00</div>
<div class="t" style="left:716.0px;top:932.00px;font-size:19.6px;color:#000;">0.00</div>
<div class="t" style="left:790.0px;top:932.00px;font-size:19.6px;color:#000;">0.00</div>
<div class="t" style="left:880.5px;top:932.00px;font-size:19.6px;color:#000;">3.846</div>
<div class="t" style="left:943.0px;top:932.00px;font-size:19.6px;color:#000;">78177.78</div>
<div class="t" style="left:1036.0px;top:932.00px;font-size:19.6px;color:#000;">470765.93</div>
<div class="t" style="left:1140.0px;top:932.00px;font-size:19.6px;color:#000;">52;13;14.214 N</div>
<div class="t" style="left:1298.5px;top:932.00px;font-size:19.6px;color:#000;">4;15;47.687 E</div>
<div class="t" style="left:1433.0px;top:932.00px;font-size:19.6px;color:#000;">08/07/2015</div>
<svg class="r" style="left:18px;top:961px" width="15" height="15" viewBox="0 0 15 15"><rect x="0" y="0.8" width="14" height="14" fill="#000" opacity="0.85"/><rect x="0.6" y="0" width="13.4" height="14" fill="#000"/><rect x="1.4" y="1" width="1.5" height="12" fill="#8a8a00"/><rect x="11.2" y="2.6" width="1.6" height="10.4" fill="#8a8a00"/><rect x="2.9" y="8.6" width="8.3" height="4.4" fill="#000"/><rect x="2.9" y="7.5" width="8.3" height="1.2" fill="#8a8a00"/><rect x="3.2" y="1" width="7.8" height="5.3" fill="#fff"/><rect x="11.6" y="1.1" width="1" height="1" fill="#fff"/><rect x="8.6" y="9.6" width="2.2" height="2.8" fill="#d0d0d0"/></svg>
<div class="t" style="left:34.5px;top:958.00px;font-size:19.6px;color:#000;">47</div>
<div class="t" style="left:66.5px;top:958.00px;font-size:19.6px;color:#000;">21:17:28</div>
<div class="t" style="left:158.5px;top:958.00px;font-size:19.6px;color:#000;">0.626</div>
<div class="t" style="left:219.0px;top:958.00px;font-size:19.6px;color:#000;">Rupture</div>
<div class="t" style="left:382.0px;top:958.00px;font-size:19.6px;color:#000;">Anchor drag</div>
<div class="t" style="left:637.0px;top:958.00px;font-size:19.6px;color:#000;">0.00</div>
<div class="t" style="left:716.0px;top:958.00px;font-size:19.6px;color:#000;">0.00</div>
<div class="t" style="left:790.0px;top:958.00px;font-size:19.6px;color:#000;">0.00</div>
<div class="t" style="left:880.5px;top:958.00px;font-size:19.6px;color:#000;">3.252</div>
<div class="t" style="left:943.0px;top:958.00px;font-size:19.6px;color:#000;">78093.52</div>
<div class="t" style="left:1036.0px;top:958.00px;font-size:19.6px;color:#000;">470684.24</div>
<div class="t" style="left:1140.0px;top:958.00px;font-size:19.6px;color:#000;">52;13;11.529 N</div>
<div class="t" style="left:1298.5px;top:958.00px;font-size:19.6px;color:#000;">4;15;43.315 E</div>
<div class="t" style="left:1433.0px;top:958.00px;font-size:19.6px;color:#000;">08/07/2015</div>
<svg class="r" style="left:18px;top:987px" width="15" height="15" viewBox="0 0 15 15"><rect x="0" y="0.8" width="14" height="14" fill="#000" opacity="0.85"/><rect x="0.6" y="0" width="13.4" height="14" fill="#000"/><rect x="1.4" y="1" width="1.5" height="12" fill="#8a8a00"/><rect x="11.2" y="2.6" width="1.6" height="10.4" fill="#8a8a00"/><rect x="2.9" y="8.6" width="8.3" height="4.4" fill="#000"/><rect x="2.9" y="7.5" width="8.3" height="1.2" fill="#8a8a00"/><rect x="3.2" y="1" width="7.8" height="5.3" fill="#fff"/><rect x="11.6" y="1.1" width="1" height="1" fill="#fff"/><rect x="8.6" y="9.6" width="2.2" height="2.8" fill="#d0d0d0"/></svg>
<div class="t" style="left:34.5px;top:984.00px;font-size:19.6px;color:#000;">46</div>
<div class="t" style="left:66.5px;top:984.00px;font-size:19.6px;color:#000;">21:16:52</div>
<div class="t" style="left:158.5px;top:984.00px;font-size:19.6px;color:#000;">0.517</div>
<div class="t" style="left:219.0px;top:984.00px;font-size:19.6px;color:#000;">Lateral Buckle</div>
<div class="t" style="left:382.0px;top:984.00px;font-size:19.6px;color:#000;">10m out of alignment</div>
<div class="t" style="left:637.0px;top:984.00px;font-size:19.6px;color:#000;">0.00</div>
<div class="t" style="left:716.0px;top:984.00px;font-size:19.6px;color:#000;">0.00</div>
<div class="t" style="left:790.0px;top:984.00px;font-size:19.6px;color:#000;">0.00</div>
<div class="t" style="left:880.5px;top:984.00px;font-size:19.6px;color:#000;">2.698</div>
<div class="t" style="left:943.0px;top:984.00px;font-size:19.6px;color:#000;">78015.07</div>
<div class="t" style="left:1036.0px;top:984.00px;font-size:19.6px;color:#000;">470608.20</div>
<div class="t" style="left:1140.0px;top:984.00px;font-size:19.6px;color:#000;">52;13;09.029 N</div>
<div class="t" style="left:1298.5px;top:984.00px;font-size:19.6px;color:#000;">4;15;39.245 E</div>
<div class="t" style="left:1433.0px;top:984.00px;font-size:19.6px;color:#000;">08/07/2015</div>
<svg class="r" style="left:18px;top:1013px" width="15" height="15" viewBox="0 0 15 15"><rect x="0" y="0.8" width="14" height="14" fill="#000" opacity="0.85"/><rect x="0.6" y="0" width="13.4" height="14" fill="#000"/><rect x="1.4" y="1" width="1.5" height="12" fill="#8a8a00"/><rect x="11.2" y="2.6" width="1.6" height="10.4" fill="#8a8a00"/><rect x="2.9" y="8.6" width="8.3" height="4.4" fill="#000"/><rect x="2.9" y="7.5" width="8.3" height="1.2" fill="#8a8a00"/><rect x="3.2" y="1" width="7.8" height="5.3" fill="#fff"/><rect x="11.6" y="1.1" width="1" height="1" fill="#fff"/><rect x="8.6" y="9.6" width="2.2" height="2.8" fill="#d0d0d0"/></svg>
<div class="t" style="left:34.5px;top:1010.00px;font-size:19.6px;color:#000;">45</div>
<div class="t" style="left:66.5px;top:1010.00px;font-size:19.6px;color:#000;">21:16:16</div>
<div class="t" style="left:158.5px;top:1010.00px;font-size:19.6px;color:#000;">0.405</div>
<div class="t" style="left:219.0px;top:1010.00px;font-size:19.6px;color:#000;">Anchor Scar</div>
<div class="t" style="left:637.0px;top:1010.00px;font-size:19.6px;color:#000;">0.00</div>
<div class="t" style="left:716.0px;top:1010.00px;font-size:19.6px;color:#000;">0.00</div>
<div class="t" style="left:790.0px;top:1010.00px;font-size:19.6px;color:#000;">0.00</div>
<div class="t" style="left:880.5px;top:1010.00px;font-size:19.6px;color:#000;">2.126</div>
<div class="t" style="left:943.0px;top:1010.00px;font-size:19.6px;color:#000;">77934.78</div>
<div class="t" style="left:1036.0px;top:1010.00px;font-size:19.6px;color:#000;">470530.36</div>
<div class="t" style="left:1140.0px;top:1010.00px;font-size:19.6px;color:#000;">52;13;06.470 N</div>
<div class="t" style="left:1298.5px;top:1010.00px;font-size:19.6px;color:#000;">4;15;35.079 E</div>
<div class="t" style="left:1433.0px;top:1010.00px;font-size:19.6px;color:#000;">08/07/2015</div>
<div class="t" style="left:1546.0px;top:1010.00px;font-size:19.6px;color:#000;">1 meter</div>
<svg class="r" style="left:18px;top:1039px" width="15" height="15" viewBox="0 0 15 15"><rect x="0" y="0.8" width="14" height="14" fill="#000" opacity="0.85"/><rect x="0.6" y="0" width="13.4" height="14" fill="#000"/><rect x="1.4" y="1" width="1.5" height="12" fill="#8a8a00"/><rect x="11.2" y="2.6" width="1.6" height="10.4" fill="#8a8a00"/><rect x="2.9" y="8.6" width="8.3" height="4.4" fill="#000"/><rect x="2.9" y="7.5" width="8.3" height="1.2" fill="#8a8a00"/><rect x="3.2" y="1" width="7.8" height="5.3" fill="#fff"/><rect x="11.6" y="1.1" width="1" height="1" fill="#fff"/><rect x="8.6" y="9.6" width="2.2" height="2.8" fill="#d0d0d0"/></svg>
<div class="t" style="left:34.5px;top:1036.00px;font-size:19.6px;color:#000;">44</div>
<div class="t" style="left:66.5px;top:1036.00px;font-size:19.6px;color:#000;">21:15:26</div>
<div class="t" style="left:158.5px;top:1036.00px;font-size:19.6px;color:#000;">0.250</div>
<div class="t" style="left:219.0px;top:1036.00px;font-size:19.6px;color:#000;">Anode</div>
<div class="t" style="left:637.0px;top:1036.00px;font-size:19.6px;color:#000;">0.00</div>
<div class="t" style="left:716.0px;top:1036.00px;font-size:19.6px;color:#000;">0.00</div>
<div class="t" style="left:790.0px;top:1036.00px;font-size:19.6px;color:#000;">0.00</div>
<div class="t" style="left:880.5px;top:1036.00px;font-size:19.6px;color:#000;">1.331</div>
<div class="t" style="left:943.0px;top:1036.00px;font-size:19.6px;color:#000;">77822.98</div>
<div class="t" style="left:1036.0px;top:1036.00px;font-size:19.6px;color:#000;">470421.99</div>
<div class="t" style="left:1140.0px;top:1036.00px;font-size:19.6px;color:#000;">52;13;02.907 N</div>
<div class="t" style="left:1298.5px;top:1036.00px;font-size:19.6px;color:#000;">4;15;29.279 E</div>
<div class="t" style="left:1433.0px;top:1036.00px;font-size:19.6px;color:#000;">08/07/2015</div>
<div class="t" style="left:1546.0px;top:1036.00px;font-size:19.6px;color:#000;">Poor</div>
<div class="t" style="left:1654.5px;top:1036.00px;font-size:19.6px;color:#000;">10</div>
<div class="t" style="left:1751.0px;top:1036.00px;font-size:19.6px;color:#000;">ATX</div>
<div class="t" style="left:1851.5px;top:1036.00px;font-size:19.6px;color:#000;">1</div>
<div class="t" style="left:1956.0px;top:1036.00px;font-size:19.6px;color:#000;">3246</div>
<svg class="r" style="left:18px;top:1065px" width="15" height="15" viewBox="0 0 15 15"><rect x="0" y="0.8" width="14" height="14" fill="#000" opacity="0.85"/><rect x="0.6" y="0" width="13.4" height="14" fill="#000"/><rect x="1.4" y="1" width="1.5" height="12" fill="#8a8a00"/><rect x="11.2" y="2.6" width="1.6" height="10.4" fill="#8a8a00"/><rect x="2.9" y="8.6" width="8.3" height="4.4" fill="#000"/><rect x="2.9" y="7.5" width="8.3" height="1.2" fill="#8a8a00"/><rect x="3.2" y="1" width="7.8" height="5.3" fill="#fff"/><rect x="11.6" y="1.1" width="1" height="1" fill="#fff"/><rect x="8.6" y="9.6" width="2.2" height="2.8" fill="#d0d0d0"/></svg>
<div class="t" style="left:34.5px;top:1062.00px;font-size:19.6px;color:#000;">43</div>
<div class="t" style="left:66.5px;top:1062.00px;font-size:19.6px;color:#000;">21:15:01</div>
<div class="t" style="left:158.5px;top:1062.00px;font-size:19.6px;color:#000;">0.172</div>
<div class="t" style="left:219.0px;top:1062.00px;font-size:19.6px;color:#000;">Start of Freespan</div>
<div class="t" style="left:637.0px;top:1062.00px;font-size:19.6px;color:#000;">0.00</div>
<div class="t" style="left:716.0px;top:1062.00px;font-size:19.6px;color:#000;">0.00</div>
<div class="t" style="left:790.0px;top:1062.00px;font-size:19.6px;color:#000;">0.00</div>
<div class="t" style="left:880.5px;top:1062.00px;font-size:19.6px;color:#000;">0.936</div>
<div class="t" style="left:943.0px;top:1062.00px;font-size:19.6px;color:#000;">77767.56</div>
<div class="t" style="left:1036.0px;top:1062.00px;font-size:19.6px;color:#000;">470368.27</div>
<div class="t" style="left:1140.0px;top:1062.00px;font-size:19.6px;color:#000;">52;13;01.141 N</div>
<div class="t" style="left:1298.5px;top:1062.00px;font-size:19.6px;color:#000;">4;15;26.403 E</div>
<div class="t" style="left:1433.0px;top:1062.00px;font-size:19.6px;color:#000;">08/07/2015</div>
<div class="r" style="left:25px;top:1100px;width:150px;height:31px;background:#f0f0f0;border-left:1px solid #fff;border-right:1px solid #696969;border-bottom:1px solid #696969;box-sizing:border-box;"></div>
<div class="r" style="left:26px;top:1129px;width:148px;height:1px;background:#a0a0a0;"></div>
<div class="r" style="left:173px;top:1100px;width:1px;height:29px;background:#a0a0a0;"></div>
<div class="t" style="left:48.3px;top:1093.80px;font-size:19.6px;color:#000;">Fire Event...</div>
<svg class="r" style="left:2167px;top:1110px" width="30" height="30"><clipPath id="gc1"><rect x="0" y="0" width="30" height="30"/></clipPath><g clip-path="url(#gc1)"><path d="M30 1.5 L1.5 30" stroke="#fff" stroke-width="1.6"/><path d="M30 4.6 L4.6 30" stroke="#999" stroke-width="2.6"/><path d="M30 8.3 L8.3 30" stroke="#fff" stroke-width="1.6"/><path d="M30 11.6 L11.6 30" stroke="#999" stroke-width="2.6"/><path d="M30 15.3 L15.3 30" stroke="#fff" stroke-width="1.6"/><path d="M30 18.6 L18.6 30" stroke="#999" stroke-width="2.6"/><path d="M30 22.3 L22.3 30" stroke="#fff" stroke-width="1.6"/></g></svg>
<svg class="r" style="left:58px;top:101px" width="32" height="32" viewBox="0 0 32 32">
<circle cx="15.7" cy="3.8" r="2.9" fill="none" stroke="#000" stroke-width="1.9"/>
<path d="M5.5 10.3 H26" stroke="#000" stroke-width="1.8"/>
<ellipse cx="5.6" cy="10.3" rx="1.6" ry="2.1"/><ellipse cx="25.9" cy="10.3" rx="1.6" ry="2.1"/>
<path d="M14.3 6.5 L17.1 6.5 L17.9 30 L13.5 30 Z"/>
<path d="M4.5 20.5 Q7.5 31 15.7 31 Q23.9 31 26.9 20.5" stroke="#000" stroke-width="3.2" fill="none"/>
<path d="M2.6 17.3 L10.2 22.2 L6 23 L3.2 26.6 Z"/>
<path d="M28.8 17.3 L21.2 22.2 L25.4 23 L28.2 26.6 Z"/>
<rect x="0" y="30.8" width="32" height="1.4" fill="#000"/>
</svg>
<div class="t" style="left:20.9px;top:135.20px;font-size:19.6px;color:#000;">Anchor Scar</div>
<svg class="r" style="left:176px;top:101px" width="32" height="32" viewBox="0 0 32 32">
<defs><linearGradient id="ga" x1="0" y1="0" x2="1" y2="1"><stop offset="0" stop-color="#6f94b4"/><stop offset="0.45" stop-color="#b4d0e6"/><stop offset="1" stop-color="#5c82a4"/></linearGradient></defs>
<rect x="0.5" y="3.2" width="31" height="28.5" fill="#fcfcfc"/>
<ellipse cx="16.5" cy="14.8" rx="12.4" ry="11.2" fill="url(#ga)" stroke="#4e4a4e" stroke-width="1" transform="rotate(-30 16.5 14.8)"/>
<ellipse cx="15.4" cy="13.8" rx="5.2" ry="6.6" fill="#fff" stroke="#6a5254" stroke-width="1.5" transform="rotate(-32 15.4 13.8)"/>
<path d="M7 20 Q9 25.5 16 26" stroke="#6a5a5c" stroke-width="1.1" fill="none"/>
<path d="M21 9 Q25 12 24 18" stroke="#e4eef6" stroke-width="1" fill="none" opacity="0.8"/>
<path d="M0.5 14.5 L4.5 14.5 M0.5 17 L4.5 17 M28.5 16.5 L31.5 16.5 M28.5 19 L31.5 19" stroke="#555" stroke-width="0.9"/>
</svg>
<div class="t" style="left:164.5px;top:135.20px;font-size:19.6px;color:#000;">Anode</div>
<svg class="r" style="left:294px;top:101px" width="32" height="32" viewBox="0 0 32 32">
<rect x="3" y="0" width="26" height="31" fill="#fdfdfd"/>
<circle cx="16" cy="10.5" r="8.6" fill="none" stroke="#c0391b" stroke-width="0.9" stroke-dasharray="1.3 0.7"/>
<path d="M13.5 20.5 L16 19 L18.5 20.5" stroke="#c0391b" stroke-width="1.1" fill="none"/>
<rect x="6" y="23" width="20" height="7" fill="#c8401e"/>
<rect x="6" y="23" width="20" height="1.2" fill="#e07050"/>
<rect x="12" y="25.5" width="7" height="2" fill="#e8a090"/>
</svg>
<div class="t" style="left:285.2px;top:135.20px;font-size:19.6px;color:#000;">Collar</div>
<svg class="r" style="left:412px;top:101px" width="32" height="32" viewBox="0 0 32 32">
<defs><linearGradient id="gc" x1="0" y1="0" x2="0" y2="1"><stop offset="0" stop-color="#cdd6de"/><stop offset="0.5" stop-color="#aab6c2"/><stop offset="1" stop-color="#7f8b98"/></linearGradient></defs>
<path d="M0 5 L24 5.5 L26 26 L0 19.6 Z" fill="url(#gc)"/>
<path d="M9 9.5 L13 6 L22 5.6 L21.5 10.5 L14 12 Z" fill="#6c7884"/>
<ellipse cx="25" cy="15.7" rx="5.2" ry="10.2" fill="#7e8a96" transform="rotate(-8 25 15.7)"/>
<ellipse cx="25.6" cy="15.8" rx="3.8" ry="8.6" fill="#d8dee6" transform="rotate(-8 25.6 15.8)"/>
</svg>
<div class="t" style="left:389.1px;top:135.20px;font-size:19.6px;color:#000;">Concrete</div>
<div class="t" style="left:392.3px;top:160.20px;font-size:19.6px;color:#000;">Cracked</div>
<svg class="r" style="left:530px;top:101px" width="32" height="32" viewBox="0 0 32 32">
<rect x="0" y="0" width="32" height="32" fill="#8fb5e2"/>
<rect x="0" y="15" width="32" height="17" fill="#c9a200"/>
<path d="M0 20.4 L32 4.6 L32 10.4 L0 25.5 Z" fill="#404040"/>
<path d="M9 10.8 L16.5 6.2" stroke="#1a1a1a" stroke-width="1.6"/>
<path d="M15 5 L19 5.2 L17 8.5 Z" fill="#1a1a1a"/>
<circle cx="24.5" cy="6.5" r="0.8" fill="#000"/>
</svg>
<div class="t" style="left:490.7px;top:135.20px;font-size:19.6px;color:#000;">End of Burial</div>
<svg class="r" style="left:58px;top:219px" width="32" height="32" viewBox="0 0 32 32">
<defs><linearGradient id="gef" x1="0" y1="0" x2="0" y2="1"><stop offset="0" stop-color="#8cbcd8"/><stop offset="1" stop-color="#c4dae6"/></linearGradient></defs>
<rect x="0" y="0" width="32" height="8" fill="url(#gef)"/>
<rect x="0" y="7.5" width="32" height="14.5" fill="#dbc4a0"/>
<path d="M0 7 L32 7 L32 9 L26 9 Q16 18 6 9 L0 9 Z" fill="#e9d8bc"/>
<path d="M7 8.5 Q16 16 25 8.5 Z" fill="#5ea0dc"/>
<rect x="3" y="7.6" width="26" height="1.3" fill="#3a5ab0"/>
<text x="16" y="29.5" font-family="Liberation Sans" font-size="5.6" font-weight="bold" fill="#3aaa10" text-anchor="middle" letter-spacing="1.3">END</text>
</svg>
<div class="t" style="left:46.5px;top:253.20px;font-size:19.6px;color:#000;">End of</div>
<div class="t" style="left:33.4px;top:278.20px;font-size:19.6px;color:#000;">Freespan</div>
<svg class="r" style="left:176px;top:219px" width="32" height="32" viewBox="0 0 32 32">
<defs><pattern id="pn" x="3.3" y="1.9" width="9" height="9" patternUnits="userSpaceOnUse"><path d="M0 0 L9 9 M9 0 L0 9" stroke="#1c5e52" stroke-width="1"/><circle cx="4.5" cy="4.5" r="0.9" fill="#123c34"/></pattern></defs>
<rect x="0" y="0" width="32" height="32" fill="url(#pn)"/>
</svg>
<div class="t" style="left:136.7px;top:253.20px;font-size:19.6px;color:#000;">Fishing Gear</div>
<svg class="r" style="left:294px;top:219px" width="32" height="32" viewBox="0 0 32 32">
<defs><linearGradient id="gl" x1="0" y1="0" x2="1" y2="1"><stop offset="0" stop-color="#30e030"/><stop offset="0.5" stop-color="#20c0c0"/><stop offset="1" stop-color="#e0f020"/></linearGradient></defs>
<rect x="0" y="0" width="32" height="32" fill="#2e4a48"/>
<path d="M0 0 H32 V7 Q20 3 10 4 Q4 5 0 6 Z" fill="#c4c4f8"/>
<rect x="0" y="8.8" width="32" height="2.2" fill="#22dd22"/>
<path d="M12 4 Q18 6 20 11 Q23 20 31 31" stroke="url(#gl)" stroke-width="2.2" fill="none"/>
</svg>
<div class="t" style="left:280.9px;top:253.20px;font-size:19.6px;color:#000;">Lateral</div>
<div class="t" style="left:281.4px;top:278.20px;font-size:19.6px;color:#000;">Buckle</div>
<svg class="r" style="left:412px;top:219px" width="32" height="32" viewBox="0 0 32 32">
<rect x="0" y="4.8" width="32" height="9.8" fill="#f6ac10"/>
<rect x="0" y="4.8" width="32" height="1.5" fill="#f8c040"/>
<rect x="8" y="3" width="8.8" height="12.8" rx="1" fill="#f0c010" stroke="#a07000" stroke-width="0.9"/>
<path d="M17.5 16 L17.5 21" stroke="#aaa" stroke-width="0.8" stroke-dasharray="1 1.2"/>
<path d="M12 23.5 L16 22 L22 22.5 L26 21.5 L23 24.5 L25 27 L19 26 L14 27 Z" fill="#e6eef6" stroke="#8a8a8a" stroke-width="0.6"/>
<rect x="0" y="30.6" width="32" height="1.3" fill="#000"/>
</svg>
<div class="t" style="left:407.6px;top:253.20px;font-size:19.6px;color:#000;">Leak</div>
<div class="r" style="left:507px;top:255px;width:79px;height:27px;background:#efefef"></div>
<svg class="r" style="left:530px;top:219px" width="32" height="32" viewBox="0 0 32 32">
<defs><linearGradient id="gm" x1="0" y1="0" x2="0" y2="1"><stop offset="0" stop-color="#3c9aa6"/><stop offset="1" stop-color="#6ea0a0"/></linearGradient></defs>
<rect x="0" y="3" width="32" height="26" fill="#77604e"/>
<rect x="0" y="3" width="32" height="5.5" fill="url(#gm)"/>
<path d="M0 20 L24 6 L31 9 L29 15 L16 24 L0 26 Z" fill="#ecebe6"/>
<path d="M3 21 L25 9 M6 23 L28 12" stroke="#c8c8c4" stroke-width="0.8"/>
<path d="M12 21 L17 18 L19 22 L14 24 Z" fill="#2a2a2a"/>
<rect x="15" y="19" width="1.5" height="3" fill="#e0c020"/>
<rect x="0" y="28" width="32" height="1.4" fill="#1a1412"/>
</svg>
<div class="t" style="left:509.2px;top:253.20px;font-size:19.6px;color:#000;">Mattress</div>
<svg class="r" style="left:58px;top:337px" width="32" height="32" viewBox="0 0 32 32">
<rect x="0.5" y="0" width="31" height="32" fill="#ececec"/>
<path d="M5 4 Q5 1 15.5 1 Q26 1 26 4 L26 28.5 Q26 31.5 15.5 31.5 Q5 31.5 5 28.5 Z" fill="#000"/>
<rect x="19" y="4" width="7" height="25" fill="#fff"/>
<path d="M19 4 L26 4 L26 28.5 Q26 30 19 30 Z" fill="#fff"/>
<ellipse cx="15.5" cy="3.6" rx="10" ry="2.3" fill="#000" stroke="#fff" stroke-width="0.9"/>
<ellipse cx="10" cy="3.2" rx="2.4" ry="1.1" fill="#fff"/>
<path d="M5 10.5 Q15.5 13.5 26 10.5 M5 21 Q15.5 24 26 21" stroke="#fff" stroke-width="1.1" fill="none"/>
<path d="M5 10 Q15.5 12.8 26 10 M5 20.5 Q15.5 23.3 26 20.5" stroke="#000" stroke-width="0.6" fill="none"/>
<path d="M5 28.5 Q5 31.5 15.5 31.5 Q26 31.5 26 28.5" stroke="#000" stroke-width="1.2" fill="none"/>
</svg>
<div class="t" style="left:31.3px;top:371.20px;font-size:19.6px;color:#000;">Oil Drums</div>
<svg class="r" style="left:176px;top:337px" width="32" height="32" viewBox="0 0 32 32">
<rect x="0" y="0" width="32" height="32" fill="#d4dca4"/>
<rect x="0" y="0" width="32" height="2" fill="#a8b8d0"/>
<path d="M0 3 L10 3 L9 6 L0 6 Z" fill="#d87850"/>
<path d="M16 0 Q15 3 10 4" stroke="#c8a050" stroke-width="1.2" fill="none"/>
<path d="M6 6 L30 26" stroke="#a8b888" stroke-width="1.4"/>
<path d="M0 22 Q12 16 20 14 Q26 12 32 10 L32 20 Q26 21 20 23 Q10 28 0 27 Z" fill="#c88a50"/>
<path d="M0 19 Q12 15 20 13 Q26 10.5 32 8" stroke="#3a2a14" stroke-width="1.5" fill="none"/>
<path d="M0 21.5 Q12 17.5 20 15.5 Q26 13 32 11" stroke="#d07030" stroke-width="1.4" fill="none"/>
<path d="M0 24 Q12 20 20 18 Q26 15.5 32 14" stroke="#3a2a14" stroke-width="1.5" fill="none"/>
<path d="M0 26.5 Q12 22.5 20 20.5 Q26 18 32 17" stroke="#e08a40" stroke-width="1.4" fill="none"/>
<path d="M0 23 L6 21" stroke="#c8d820" stroke-width="1"/>
<path d="M0 28 Q8 26 14 24" stroke="#302010" stroke-width="1.2" fill="none"/>
<path d="M22 22 L32 29" stroke="#405020" stroke-width="1.2"/>
<path d="M21 20 L28 19" stroke="#f0f0e0" stroke-width="1"/>
</svg>
<div class="t" style="left:157.9px;top:371.20px;font-size:19.6px;color:#000;">Pipeline</div>
<div class="t" style="left:154.1px;top:396.20px;font-size:19.6px;color:#000;">Crossing</div>
<svg class="r" style="left:294px;top:337px" width="32" height="32" viewBox="0 0 32 32">
<rect x="0" y="4.4" width="32" height="22.4" fill="#000"/>
<path d="M1 20 L4 12 L11 9 L17 11 L21 5 L28 6 L31 12 L30 20 L27 25 L5 25 Z" fill="#8c8c8c"/>
<path d="M17 11 L21 5 L28 6 L31 12 L29 17 L22 18 L17 14 Z" fill="#a6a6a6"/>
<path d="M4 20 Q9 17 13 20 Q18 16 24 19 Q28 18 29 22 L27 25 L5 25 Z" fill="#c6c6c6"/>
<path d="M6 24 Q10 21 14 23 Q19 21 22 24 Z" fill="#e6e6e6"/>
<rect x="0" y="30.5" width="32" height="1.3" fill="#000"/>
</svg>
<div class="t" style="left:283.6px;top:371.20px;font-size:19.6px;color:#000;">Rocks</div>
<svg class="r" style="left:412px;top:337px" width="32" height="32" viewBox="0 0 32 32">
<defs><linearGradient id="gr" x1="0" y1="0" x2="0" y2="1"><stop offset="0" stop-color="#b4c4d8"/><stop offset="0.5" stop-color="#8498b2"/><stop offset="1" stop-color="#6a7e98"/></linearGradient></defs>
<path d="M10.5 3 Q8 7 9.8 10.5 Q12 13 14.6 12 Q15.6 8 10.5 3 Z" fill="#6cc0ec"/>
<path d="M22.5 1.2 Q17 5 17.4 10.5 Q18.5 12 20 11 Q24 7 22.5 1.2 Z" fill="#6cc0ec"/>
<ellipse cx="8.6" cy="16.4" rx="1.6" ry="1.8" fill="#78c4ee"/><ellipse cx="23.6" cy="15.4" rx="1.3" ry="1.5" fill="#78c4ee"/>
<circle cx="12" cy="13.8" r="0.7" fill="#90d0f0"/><circle cx="19.6" cy="14" r="0.7" fill="#90d0f0"/>
<rect x="1.6" y="21" width="4.6" height="8.3" rx="1" fill="url(#gr)"/>
<rect x="25.6" y="21" width="4.4" height="8.3" rx="1" fill="url(#gr)"/>
<path d="M6 22 L13 22 L15.5 18.5 L17 22 L21 22 L24.4 19.4 L25 22 L26 22 L26 28 Q16 30 6 28 Z" fill="url(#gr)"/>
<path d="M13 22.5 L15.5 18.5 L17.5 22.6 M20.5 22.6 L24.4 19.4 L25 22.5" stroke="#3e3480" stroke-width="1.1" fill="none"/>
<rect x="0.2" y="31" width="31.8" height="1.1" fill="#000"/>
</svg>
<div class="t" style="left:394.0px;top:371.20px;font-size:19.6px;color:#000;">Rupture</div>
<svg class="r" style="left:530px;top:337px" width="32" height="32" viewBox="0 0 32 32">
<rect x="0" y="0" width="32" height="32" fill="#d8c08e"/>
<path d="M0 4 Q10 0 20 4 T32 3 M0 11 Q10 7 20 11 T32 10 M0 18 Q10 14 20 18 T32 17 M0 25 Q10 21 20 25 T32 24" stroke="#c2a872" stroke-width="1.2" fill="none"/>
<path d="M0 6.5 Q10 2.5 20 6.5 T32 5.5 M0 13.5 Q10 9.5 20 13.5 T32 12.5 M0 20.5 Q10 16.5 20 20.5 T32 19.5 M0 27.5 Q10 23.5 20 27.5 T32 26.5" stroke="#e6d4a8" stroke-width="1.1" fill="none"/>
</svg>
<div class="t" style="left:496.2px;top:371.20px;font-size:19.6px;color:#000;">Sandwaves</div>
<svg class="r" style="left:58px;top:455px" width="32" height="32" viewBox="0 0 32 32">
<rect x="0" y="0" width="32" height="32" fill="#8fb5e2"/>
<rect x="0" y="15" width="32" height="17" fill="#c9a200"/>
<path d="M0 7.6 L32 20.5 L32 26 L0 13.2 Z" fill="#404040"/>
<path d="M10 5 L18.5 9.2" stroke="#111" stroke-width="1.6"/>
<path d="M17.2 7 L21 10.4 L16 11.2 Z" fill="#111"/>
</svg>
<div class="t" style="left:43.2px;top:489.20px;font-size:19.6px;color:#000;">Start of</div>
<div class="t" style="left:49.8px;top:514.20px;font-size:19.6px;color:#000;">Burial</div>
<svg class="r" style="left:176px;top:455px" width="32" height="32" viewBox="0 0 32 32">
<rect x="0" y="0" width="32" height="32" fill="#8fb5e2"/>
<rect x="0" y="19.6" width="32" height="12.4" fill="#c9a200"/>
<rect x="0" y="6.4" width="32" height="4.4" fill="#404040"/>
<path d="M14.5 25 L14.5 14" stroke="#000" stroke-width="1.6"/>
<path d="M12.2 16.5 L14.5 11.5 L16.8 16.5 Z" fill="#000"/>
</svg>
<div class="t" style="left:161.2px;top:489.20px;font-size:19.6px;color:#000;">Start of</div>
<div class="t" style="left:151.4px;top:514.20px;font-size:19.6px;color:#000;">Freespan</div>
<svg class="r" style="left:294px;top:455px" width="32" height="32" viewBox="0 0 32 32">
<defs><linearGradient id="gu" x1="0" y1="0" x2="0" y2="1"><stop offset="0" stop-color="#4c7676"/><stop offset="0.55" stop-color="#7a8a88"/><stop offset="1" stop-color="#a09284"/></linearGradient></defs>
<rect x="0" y="0" width="32" height="32" fill="url(#gu)"/>
<path d="M0 9 Q6 13 12 14 Q16 15 18 20 Q21 25 32 28" stroke="#303838" stroke-width="1.8" fill="none"/>
<path d="M0 8 Q6 12 12 13 Q16 14 18 19 Q21 24 32 27" stroke="#e8f0f0" stroke-width="1" fill="none"/>
</svg>
<div class="t" style="left:269.4px;top:489.20px;font-size:19.6px;color:#000;">Upheaval</div>
<svg class="r" style="left:412px;top:455px" width="32" height="32" viewBox="0 0 32 32">
<rect x="0" y="0" width="32" height="32" fill="#e6141e"/>
<rect x="13" y="0.5" width="13" height="2.8" fill="#fff"/>
<rect x="16" y="2" width="7" height="19" fill="#fff"/>
<rect x="10" y="16.5" width="18" height="6" fill="#fff"/>
<rect x="10" y="19" width="18" height="0.8" fill="#f4a0a0"/>
<circle cx="3.5" cy="9.5" r="2" fill="none" stroke="#fff" stroke-width="1.5"/><circle cx="8" cy="9.5" r="2" fill="none" stroke="#fff" stroke-width="1.5"/><circle cx="12" cy="9.5" r="1.6" fill="#fff"/>
<circle cx="27" cy="9.5" r="1.8" fill="none" stroke="#fff" stroke-width="1.4"/><circle cx="31" cy="9.5" r="1.5" fill="#fff"/>
<rect x="11" y="28" width="3" height="1.6" fill="#fff"/><rect x="25" y="28" width="3" height="1.6" fill="#fff"/>
<rect x="16" y="22" width="7" height="10" fill="#fff" opacity="0.25"/>
</svg>
<div class="t" style="left:388.1px;top:489.20px;font-size:19.6px;color:#000;">Wellhead</div>
</body></html>
